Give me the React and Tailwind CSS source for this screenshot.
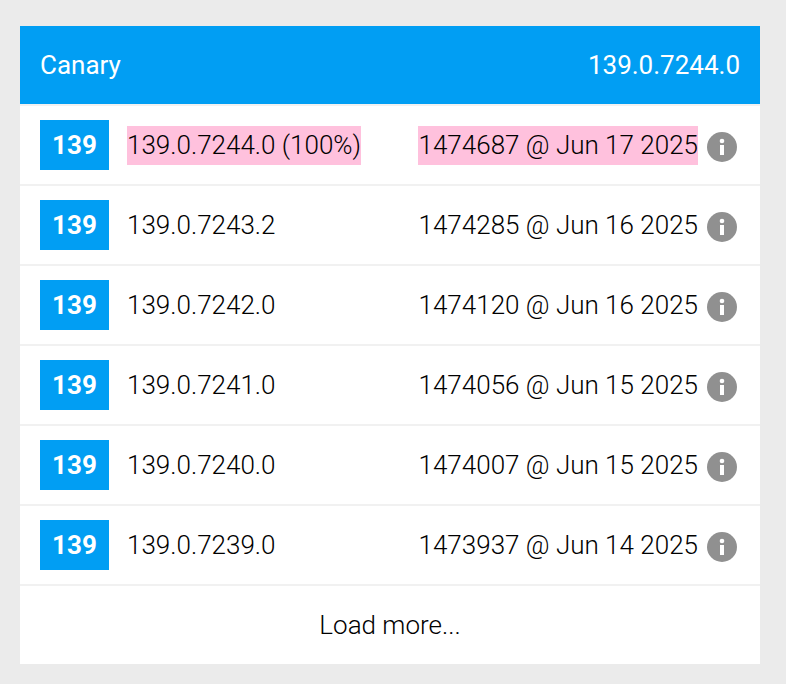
const rows = [
  ["139.0.7244.0 (100%)", "1474687 @ Jun 17 2025", true],
  ["139.0.7243.2", "1474285 @ Jun 16 2025", false],
  ["139.0.7242.0", "1474120 @ Jun 16 2025", false],
  ["139.0.7241.0", "1474056 @ Jun 15 2025", false],
  ["139.0.7240.0", "1474007 @ Jun 15 2025", false],
  ["139.0.7239.0", "1473937 @ Jun 14 2025", false],
];

function InfoIcon() {
  return (
    <svg viewBox="0 0 30 30" className="block h-[30px] w-[30px]">
      <circle cx="15" cy="15" r="15" fill="#909090" />
      <circle cx="15" cy="9" r="2.3" fill="#fff" />
      <rect x="13" y="13" width="4" height="10" fill="#fff" />
    </svg>
  );
}

export default function App() {
  return (
    <div className="h-[684px] w-[786px] bg-[#ebebeb] pl-5 pr-[26px] pt-[26px] font-['Roboto',sans-serif] text-[26px] font-light leading-[39px] text-black">
      <div className="bg-white">
        <div className="flex h-[78px] items-center justify-between bg-[#019ef3] px-5 font-normal text-white">
          <span>Canary</span>
          <span>139.0.7244.0</span>
        </div>
        {rows.map(([version, build, hl]) => (
          <div key={version} className="flex h-[80px] items-center border-t-2 border-[#f1f1f1] pl-5 pr-[23px]">
            <div className="flex h-[50px] w-[69px] shrink-0 items-center justify-center bg-[#019ef3] font-bold text-white">139</div>
            <div className="ml-[18px] flex-1">
              <span className={hl ? "inline-block bg-[#ffc1dd] align-top" : "inline-block align-top"}>{version}</span>
            </div>
            <span className={hl ? "w-[280px] whitespace-nowrap bg-[#ffc1dd] text-right" : "w-[280px] whitespace-nowrap text-right"}>{build}</span>
            <div className="ml-[9px] mt-[3px]"><InfoIcon /></div>
          </div>
        ))}
        <div className="flex h-[80px] items-center justify-center border-t-2 border-[#f1f1f1]">Load more...</div>
      </div>
    </div>
  );
}
